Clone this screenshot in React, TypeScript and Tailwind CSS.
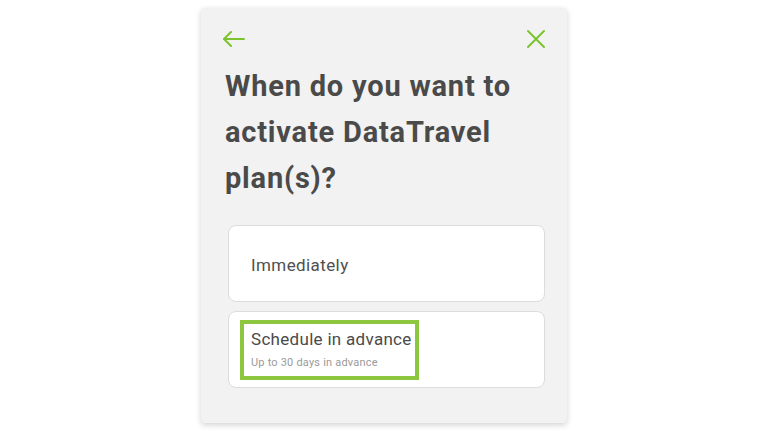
export default function App() {
  return (
    <div className="min-h-[432px] w-full bg-white pt-2 font-['Roboto',sans-serif]">
      <div className="mx-auto h-[415px] w-[366px] rounded-sm bg-[#f2f2f2] shadow-[0_2px_6px_rgba(0,0,0,0.18)]">
        <div className="flex items-center justify-between pl-[21px] pr-[21px] pt-[21px]">
          <svg width="24" height="20" viewBox="0 0 24 20" fill="none" stroke="#7cc42e" strokeWidth="2" strokeLinecap="round" strokeLinejoin="round">
            <path d="M22 10H2" />
            <path d="M9 3 2 10l7 7" />
          </svg>
          <svg width="20" height="20" viewBox="0 0 20 20" fill="none" stroke="#7cc42e" strokeWidth="2" strokeLinecap="round">
            <path d="M2 2l16 16M18 2 2 18" />
          </svg>
        </div>
        <h1 className="mt-[14px] pl-[24px] text-[29px] font-bold leading-[46px] tracking-[0.8px] text-[#4a4a4a]">
          When do you want to
          <br />
          activate DataTravel
          <br />
          plan(s)?
        </h1>
        <div className="mt-[24px] flex flex-col gap-[9px] pl-[27px] pr-[22px]">
          <button className="flex h-[77px] items-center rounded-lg border border-[#dcdcdc] bg-white pl-[22px] pt-[5px] text-left text-[17px] tracking-[0.4px] text-[#4f4f4f]">
            Immediately
          </button>
          <button className="flex h-[77px] items-center rounded-lg border border-[#dcdcdc] bg-white pl-[11px] text-left">
            <span className="flex h-[60px] w-[179px] flex-col justify-center border-4 border-[#8dc63f] pl-[7px]">
              <span className="text-[17px] leading-5 tracking-[0.3px] text-[#4a4a4a]">Schedule in advance</span>
              <span className="mt-[6px] text-[11px] leading-4 tracking-[0.2px] text-[#9a9a9a]">Up to 30 days in advance</span>
            </span>
          </button>
        </div>
      </div>
    </div>
  );
}
